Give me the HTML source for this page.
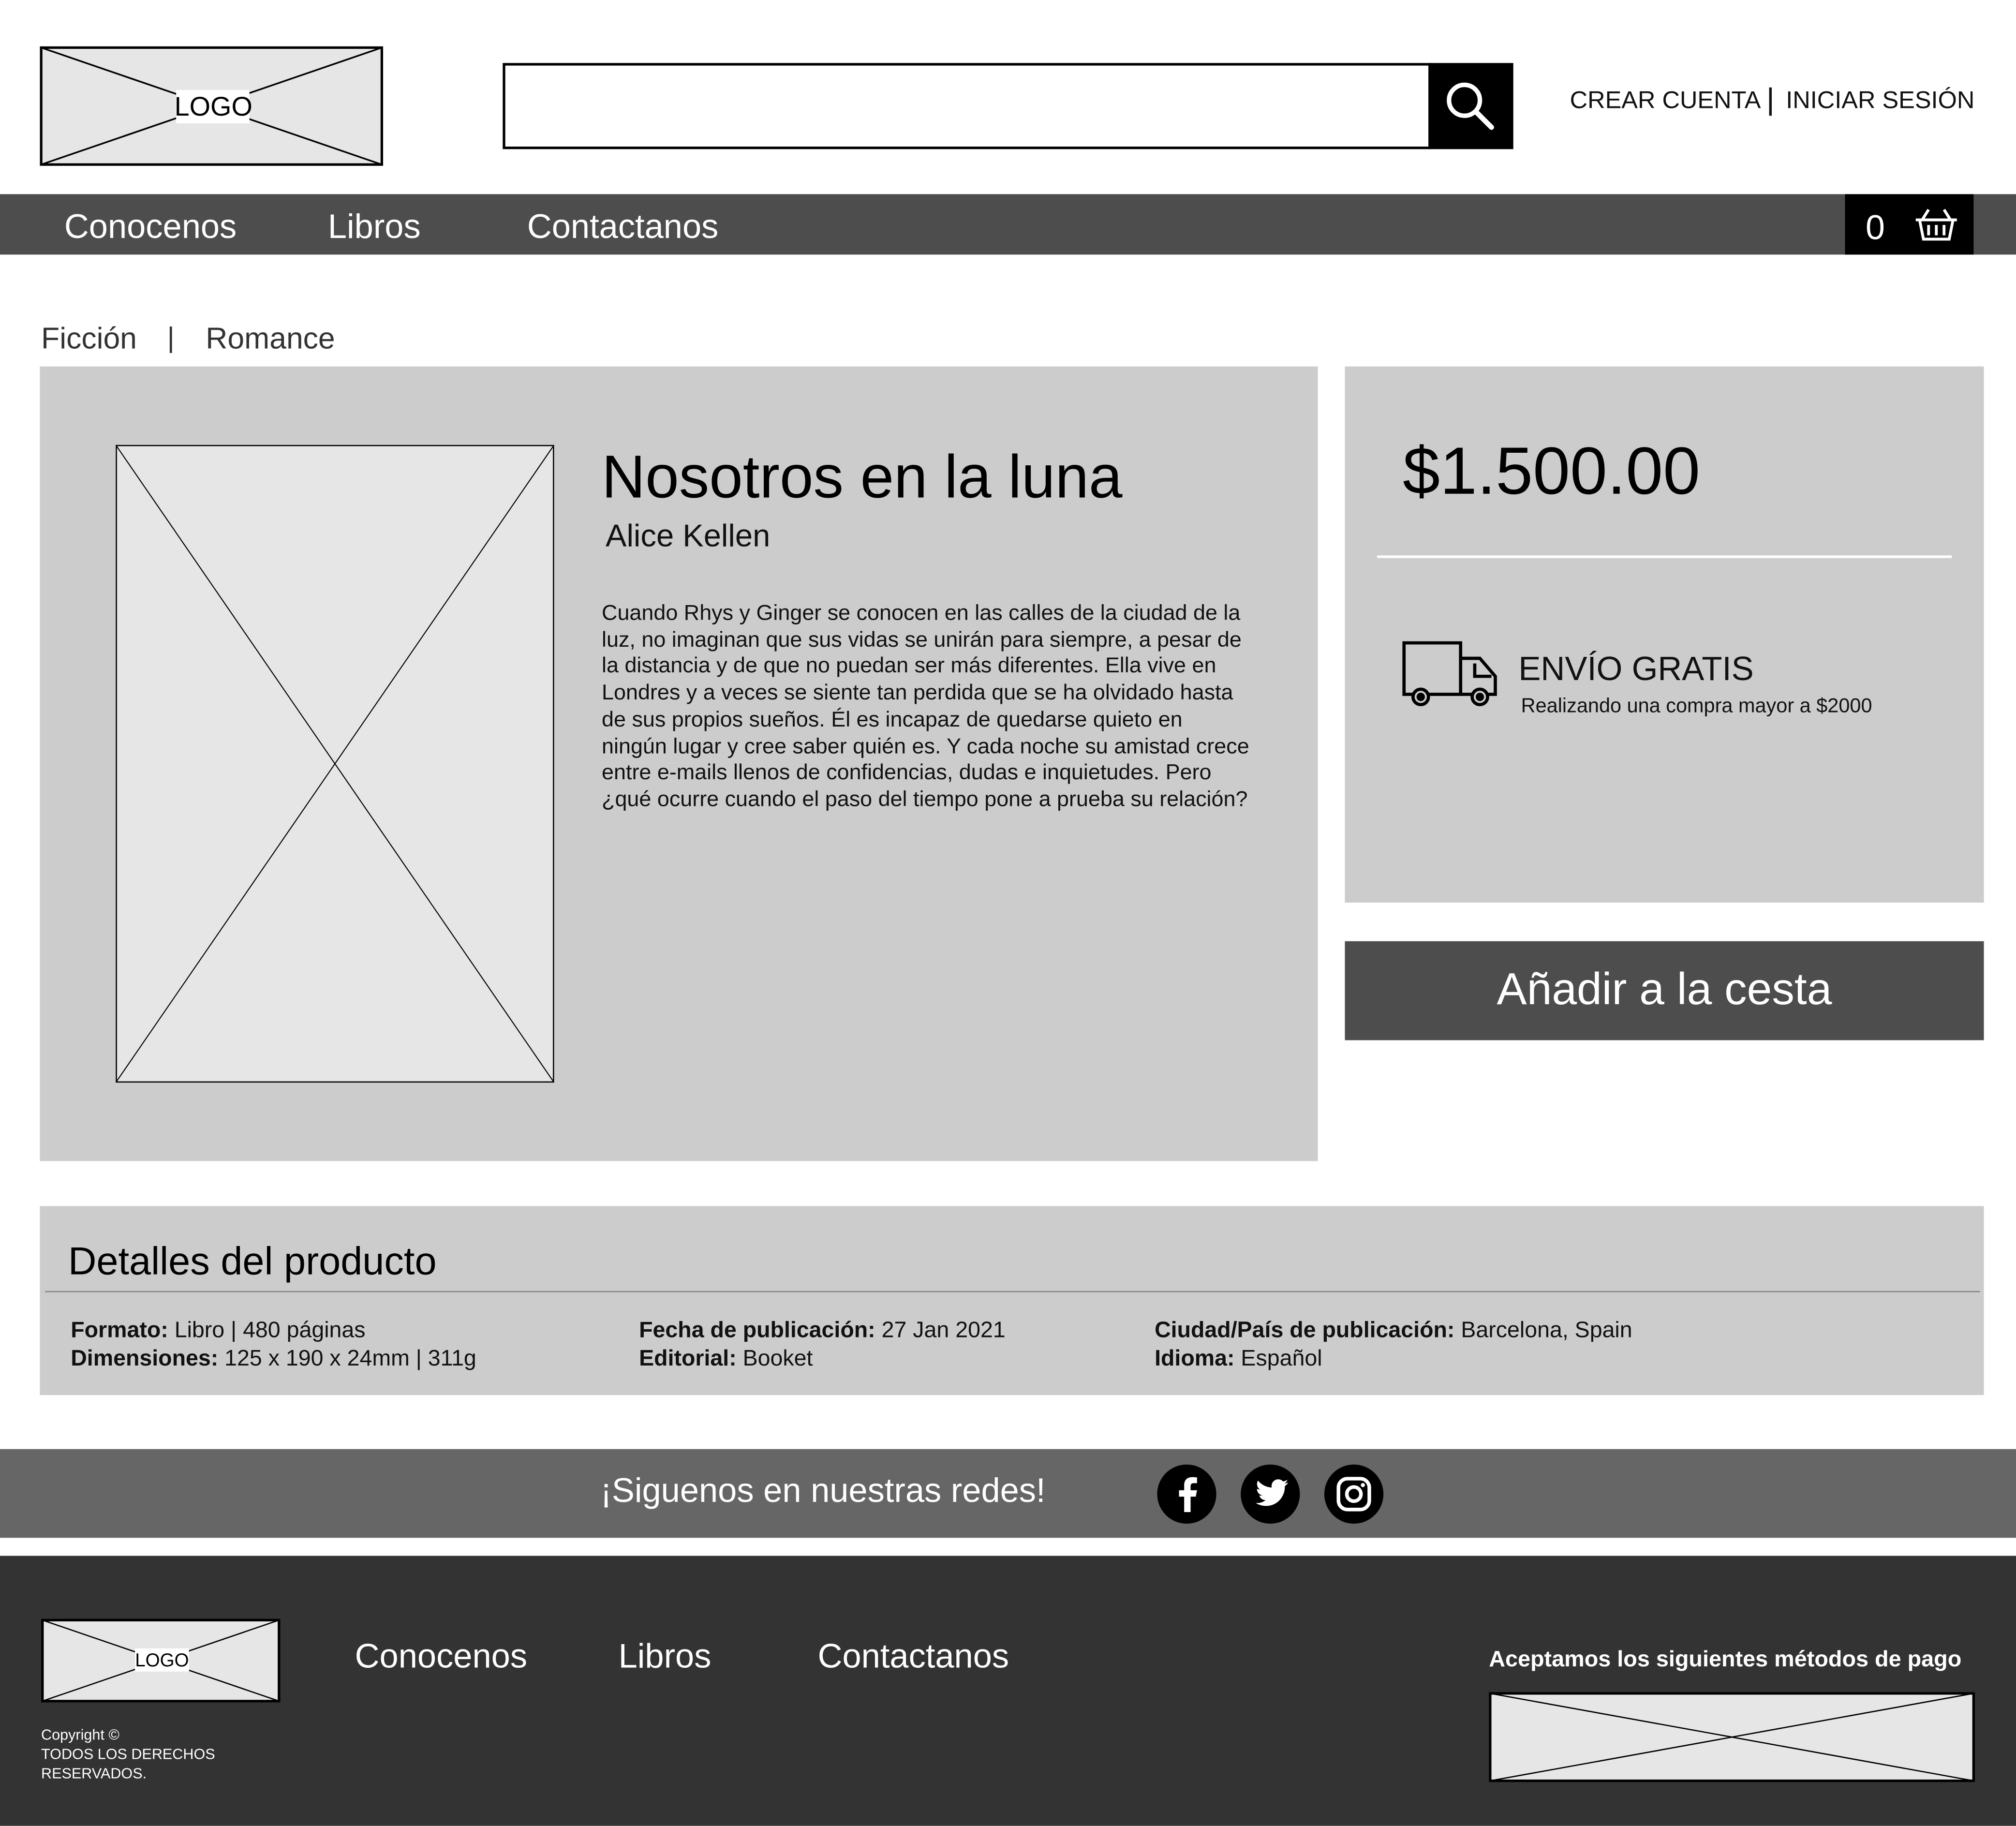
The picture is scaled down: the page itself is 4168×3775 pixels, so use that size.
<!DOCTYPE html>
<html><head><meta charset="utf-8">
<style>
html,body{margin:0;padding:0;background:#fff;}
body{width:4168px;height:3773px;overflow:hidden;font-family:"Liberation Sans",sans-serif;}
#w{position:absolute;left:0;top:0;width:1568px;height:1420px;transform:scale(2.6582);transform-origin:0 0;}
.a{position:absolute;}
.t{position:absolute;white-space:nowrap;line-height:1;}
</style></head><body><div id="w">

<!-- logo -->
<svg class="a" style="left:31px;top:36px" width="267" height="93"><rect x="1" y="1" width="265" height="91" fill="#e6e6e6" stroke="#000" stroke-width="2"/><line x1="1" y1="1" x2="266" y2="92" stroke="#000" stroke-width="1.3"/><line x1="266" y1="1" x2="1" y2="92" stroke="#000" stroke-width="1.3"/><rect x="106" y="34" width="57" height="26" fill="#fff"/><text x="135" y="54" font-size="21" text-anchor="middle" font-family="Liberation Sans" fill="#000">LOGO</text></svg>

<!-- search -->
<div class="a" style="left:391px;top:49px;width:718px;height:63px;border:2px solid #000;background:#fff"></div>
<div class="a" style="left:1111px;top:49px;width:66px;height:67px;background:#000"></div>
<svg class="a" style="left:1122px;top:61px" width="44" height="44"><circle cx="17" cy="17" r="12" fill="none" stroke="#fff" stroke-width="3.5"/><line x1="26" y1="26" x2="38" y2="38" stroke="#fff" stroke-width="4" stroke-linecap="round"/></svg>
<div class="t" style="left:1221px;top:69px;font-size:19px;color:#111">CREAR CUENTA</div>
<div class="a" style="left:1376px;top:68px;width:1.5px;height:22px;background:#111"></div>
<div class="t" style="left:1389px;top:69px;font-size:19px;color:#111">INICIAR SESIÓN</div>

<!-- nav -->
<div class="a" style="left:0;top:151px;width:1568px;height:47px;background:#4d4d4d"></div>
<div class="t" style="left:50px;top:163px;font-size:26.5px;color:#fff">Conocenos</div>
<div class="t" style="left:255px;top:163px;font-size:26.5px;color:#fff">Libros</div>
<div class="t" style="left:410px;top:163px;font-size:26.5px;color:#fff">Contactanos</div>
<div class="a" style="left:1435px;top:151px;width:100px;height:47px;background:#000"></div>
<div class="t" style="left:1451px;top:164px;font-size:27px;color:#fff">0</div>
<svg class="a" style="left:1489px;top:161px" width="34" height="28" fill="none" stroke="#fff" stroke-width="2.2"><path d="M1 10h32M4 10l3 15h20l3-15M11 2l-5 8M23 2l5 8M11 14v8M17 14v8M23 14v8"/></svg>

<!-- breadcrumb -->
<div class="t" style="left:32px;top:252px;font-size:23.5px;color:#333">Ficción</div>
<div class="t" style="left:130px;top:252px;font-size:22px;color:#333">|</div>
<div class="t" style="left:160px;top:252px;font-size:23.5px;color:#333">Romance</div>

<!-- main panel -->
<div class="a" style="left:31px;top:285px;width:994px;height:618px;background:#ccc"></div>
<svg class="a" style="left:90px;top:346px" width="341" height="496"><rect x="0.5" y="0.5" width="340" height="495" fill="#e6e6e6" stroke="#000"/><line x1="0" y1="0" x2="341" y2="496" stroke="#000" stroke-width="0.8"/><line x1="341" y1="0" x2="0" y2="496" stroke="#000" stroke-width="0.8"/></svg>
<div class="t" style="left:468px;top:347px;font-size:47px;color:#000">Nosotros en la luna</div>
<div class="t" style="left:471px;top:406px;font-size:24.5px;color:#111">Alice Kellen</div>
<div class="a" style="left:468px;top:467px;white-space:nowrap;font-size:16.9px;line-height:20.7px;color:#111">Cuando Rhys y Ginger se conocen en las calles de la ciudad de la<br>luz, no imaginan que sus vidas se unirán para siempre, a pesar de<br>la distancia y de que no puedan ser más diferentes. Ella vive en<br>Londres y a veces se siente tan perdida que se ha olvidado hasta<br>de sus propios sueños. Él es incapaz de quedarse quieto en<br>ningún lugar y cree saber quién es. Y cada noche su amistad crece<br>entre e-mails llenos de confidencias, dudas e inquietudes. Pero<br>¿qué ocurre cuando el paso del tiempo pone a prueba su relación?</div>

<!-- price panel -->
<div class="a" style="left:1046px;top:285px;width:497px;height:417px;background:#ccc"></div>
<div class="t" style="left:1091px;top:341px;font-size:52px;color:#000">$1.500.00</div>
<div class="a" style="left:1071px;top:432px;width:447px;height:2px;background:#fff"></div>
<svg class="a" style="left:1089px;top:498px" width="77" height="53" fill="none" stroke="#000" stroke-width="2.5"><path d="M3 2h44v40H3zM47 14h15l12 14v14H47M58 18v10h13"/><circle cx="16" cy="44" r="6" fill="#ccc"/><circle cx="62" cy="44" r="6" fill="#ccc"/><circle cx="16" cy="44" r="2" fill="#000"/><circle cx="62" cy="44" r="2" fill="#000"/></svg>
<div class="t" style="left:1181px;top:507px;font-size:26px;color:#111">ENVÍO GRATIS</div>
<div class="t" style="left:1183px;top:542px;font-size:15.6px;color:#111">Realizando una compra mayor a $2000</div>

<div class="a" style="left:1046px;top:732px;width:497px;height:77px;background:#4d4d4d"></div>
<div class="t" style="left:1046px;width:497px;text-align:center;top:752px;font-size:35px;color:#fff">Añadir a la cesta</div>

<!-- details -->
<div class="a" style="left:31px;top:938px;width:1512px;height:147px;background:#ccc"></div>
<div class="t" style="left:53px;top:966px;font-size:30.5px;color:#000">Detalles del producto</div>
<div class="a" style="left:35px;top:1004px;width:1505px;height:1px;background:#888"></div>
<div class="t" style="left:55px;top:1026px;font-size:17.5px;color:#111"><b>Formato:</b> Libro | 480 páginas</div>
<div class="t" style="left:55px;top:1048px;font-size:17.5px;color:#111"><b>Dimensiones:</b> 125 x 190 x 24mm | 311g</div>
<div class="t" style="left:497px;top:1026px;font-size:17.5px;color:#111"><b>Fecha de publicación:</b> 27 Jan 2021</div>
<div class="t" style="left:497px;top:1048px;font-size:17.5px;color:#111"><b>Editorial:</b> Booket</div>
<div class="t" style="left:898px;top:1026px;font-size:17.5px;color:#111"><b>Ciudad/País de publicación:</b> Barcelona, Spain</div>
<div class="t" style="left:898px;top:1048px;font-size:17.5px;color:#111"><b>Idioma:</b> Español</div>

<!-- social -->
<div class="a" style="left:0;top:1127px;width:1568px;height:69px;background:#666"></div>
<div class="t" style="left:467px;top:1146px;font-size:26.5px;color:#fff">¡Siguenos en nuestras redes!</div>
<svg class="a" style="left:899px;top:1138px" width="180" height="48">
<circle cx="24" cy="24" r="23" fill="#000"/><path d="M27 38V26h4l1-5h-5v-3c0-1.5.5-2.5 2.5-2.5H32v-4.5c-.5 0-2-.2-3.8-.2-3.7 0-6.2 2.2-6.2 6.3V21h-4v5h4v12z" fill="#fff"/>
<circle cx="89" cy="24" r="23" fill="#000"/><path d="M103 15c-1 .5-2 .7-3 .8 1.1-.7 1.9-1.7 2.3-2.9-1 .6-2.1 1-3.3 1.3a5.2 5.2 0 0 0-8.9 4.7c-4.3-.2-8.1-2.3-10.7-5.4-1.4 2.4-.7 5.5 1.6 7-.9 0-1.7-.3-2.4-.6 0 2.5 1.8 4.7 4.2 5.1-.8.2-1.6.3-2.4.1.7 2.1 2.6 3.6 4.9 3.6-2.2 1.7-5 2.5-7.7 2.2 2.3 1.5 5.1 2.3 8 2.3 9.6 0 15-8.1 14.7-15.4 1-.7 1.9-1.6 2.6-2.6z" fill="#fff"/>
<circle cx="154" cy="24" r="23" fill="#000"/><rect x="142" y="12" width="24" height="24" rx="7" fill="none" stroke="#fff" stroke-width="2.8"/><circle cx="154" cy="24" r="5.5" fill="none" stroke="#fff" stroke-width="2.8"/><circle cx="161" cy="17" r="1.6" fill="#fff"/>
</svg>

<!-- footer -->
<div class="a" style="left:0;top:1210px;width:1568px;height:210px;background:#333"></div>
<svg class="a" style="left:32px;top:1259px" width="186" height="65"><rect x="1" y="1" width="184" height="63" fill="#e6e6e6" stroke="#000" stroke-width="2"/><line x1="1" y1="1" x2="185" y2="64" stroke="#000"/><line x1="185" y1="1" x2="1" y2="64" stroke="#000"/><rect x="73" y="23" width="42" height="18" fill="#fff"/><text x="94" y="37" font-size="14.5" text-anchor="middle" font-family="Liberation Sans" fill="#000">LOGO</text></svg>
<div class="t" style="left:276px;top:1275px;font-size:26.5px;color:#fff">Conocenos</div>
<div class="t" style="left:481px;top:1275px;font-size:26.5px;color:#fff">Libros</div>
<div class="t" style="left:636px;top:1275px;font-size:26.5px;color:#fff">Contactanos</div>
<div class="a" style="left:32px;top:1343px;font-size:11.5px;line-height:15px;color:#fff">Copyright ©<br>TODOS LOS DERECHOS<br>RESERVADOS.</div>
<div class="t" style="left:1158px;top:1282px;font-size:17.6px;font-weight:bold;color:#fff">Aceptamos los siguientes métodos de pago</div>
<svg class="a" style="left:1158px;top:1316px" width="378" height="70"><rect x="1" y="1" width="376" height="68" fill="#e6e6e6" stroke="#000" stroke-width="2"/><line x1="1" y1="1" x2="377" y2="69" stroke="#000"/><line x1="377" y1="1" x2="1" y2="69" stroke="#000"/></svg>

</div></body></html>
